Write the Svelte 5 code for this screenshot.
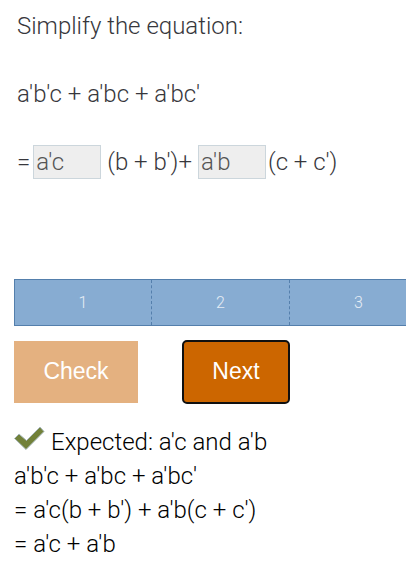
<script>
  let first = $state("a'c");
  let second = $state("a'b");
  const steps = [1, 2, 3];
  const solution = ["a'b'c + a'bc + a'bc'", "= a'c(b + b') + a'b(c + c')", "= a'c + a'b"];
</script>

<main>
  <section class="question">
    <p>Simplify the equation:</p>
    <p>a'b'c + a'bc + a'bc'</p>
    <div class="answer">
      <span>=</span>
      <input class="first" type="text" aria-label="First factor" bind:value={first} readonly />
      <span>(b + b')+</span>
      <input class="second" type="text" aria-label="Second factor" bind:value={second} readonly />
      <span>(c + c')</span>
    </div>
  </section>

  <ol class="steps">
    {#each steps as step}
      <li>{step}</li>
    {/each}
  </ol>

  <div class="actions">
    <button class="check" type="button" disabled>Check</button>
    <button class="next" type="button">Next</button>
  </div>

  <section class="feedback">
    <p>
      <svg width="31" height="26" viewBox="0 0 31 26" aria-hidden="true">
        <path d="M0.500 13.500L5 9L12.500 15.500L26 2L30 6.500L12 24.500Z" fill="#728139" stroke="#a9b9bd" stroke-width="1" />
      </svg>
      <span>Expected: a'c and a'b</span>
    </p>
    {#each solution as line}
      <p>{line}</p>
    {/each}
  </section>
</main>

<style>
  :global(body) {
    margin: 0;
    background: #fff;
  }
  main {
    padding: 9px 0 8px 14px;
    overflow: hidden;
    font: 300 24px/34px Roboto, "Liberation Sans", sans-serif;
    color: #000;
  }
  p {
    margin: 0;
  }
  .question {
    display: flex;
    flex-direction: column;
    gap: 34px;
    padding-left: 3px;
    color: #37373c;
  }
  .answer {
    display: flex;
    align-items: center;
    white-space: nowrap;
  }
  input {
    box-sizing: border-box;
    width: 68px;
    height: 34px;
    padding: 0 2px;
    border: 1px solid #ccd6dc;
    border-radius: 0;
    background: #eee;
    color: #545454;
    font: inherit;
    outline: none;
  }
  .first {
    margin: 0 6px 0 3px;
  }
  .second {
    margin: 0 2px 0 6px;
  }
  .steps {
    display: flex;
    box-sizing: border-box;
    width: max-content;
    height: 47px;
    margin: 100px 0 0;
    padding: 0;
    border: solid #547fac;
    border-width: 1px 0;
    background: #87acd2;
    color: #e6edf5;
    font-size: 16px;
    line-height: 45px;
    list-style: none;
  }
  li {
    box-sizing: border-box;
    width: 138px;
    border-right: 1px dashed #547fac;
    text-align: center;
  }
  li:first-child {
    border-left: 1px solid #547fac;
  }
  li:last-child {
    border-right-style: solid;
  }
  .actions {
    display: flex;
    gap: 45px;
    padding-top: 15px;
  }
  button {
    height: 62px;
    padding: 0 0 2px;
    border: 0;
    color: #fff;
    font: 400 23px "Liberation Sans", Arial, sans-serif;
  }
  .check {
    width: 124px;
    background: #e4b180;
  }
  .next {
    width: 106px;
    border-radius: 4px;
    background: #cc6600;
    outline: 2px solid #101010;
    outline-offset: -1px;
  }
  .feedback {
    padding-top: 22px;
  }
  .feedback p {
    display: flex;
    align-items: flex-start;
    gap: 6px;
  }
</style>
